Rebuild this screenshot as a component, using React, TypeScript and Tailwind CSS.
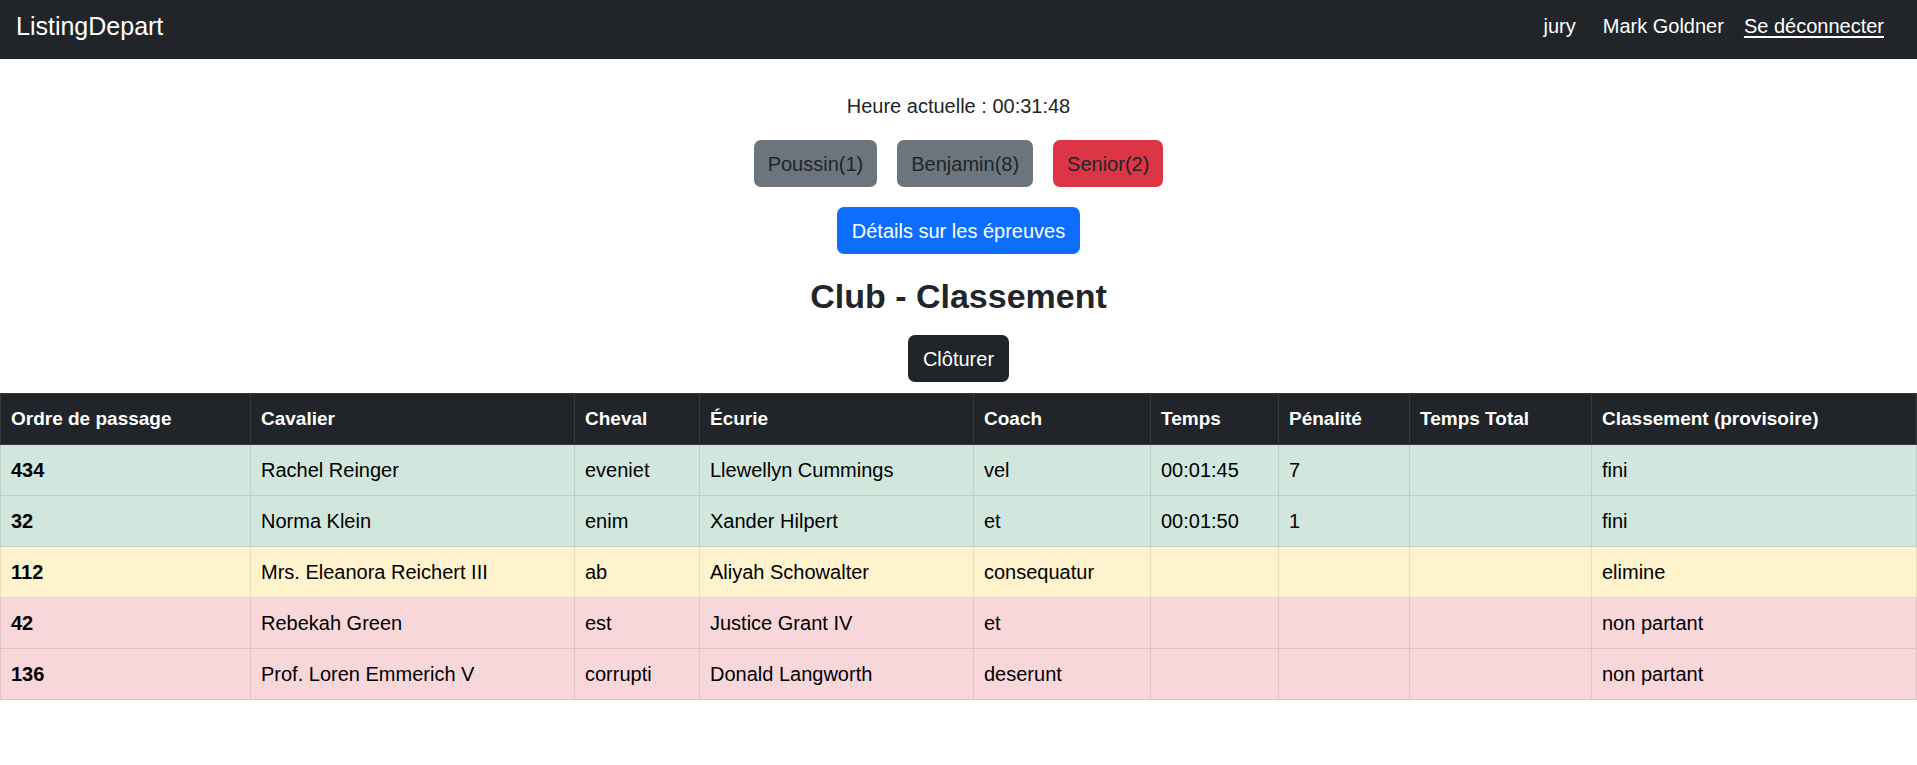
import React from 'react';

type Row = {
  ordre: string;
  cavalier: string;
  cheval: string;
  ecurie: string;
  coach: string;
  temps: string;
  penalite: string;
  total: string;
  classement: string;
  tone: 'success' | 'warning' | 'danger';
};

const rows: Row[] = [
  { ordre: '434', cavalier: 'Rachel Reinger', cheval: 'eveniet', ecurie: 'Llewellyn Cummings', coach: 'vel', temps: '00:01:45', penalite: '7', total: '', classement: 'fini', tone: 'success' },
  { ordre: '32', cavalier: 'Norma Klein', cheval: 'enim', ecurie: 'Xander Hilpert', coach: 'et', temps: '00:01:50', penalite: '1', total: '', classement: 'fini', tone: 'success' },
  { ordre: '112', cavalier: 'Mrs. Eleanora Reichert III', cheval: 'ab', ecurie: 'Aliyah Schowalter', coach: 'consequatur', temps: '', penalite: '', total: '', classement: 'elimine', tone: 'warning' },
  { ordre: '42', cavalier: 'Rebekah Green', cheval: 'est', ecurie: 'Justice Grant IV', coach: 'et', temps: '', penalite: '', total: '', classement: 'non partant', tone: 'danger' },
  { ordre: '136', cavalier: 'Prof. Loren Emmerich V', cheval: 'corrupti', ecurie: 'Donald Langworth', coach: 'deserunt', temps: '', penalite: '', total: '', classement: 'non partant', tone: 'danger' },
];

const toneRow = {
  success: 'bg-[#d1e7dd]',
  warning: 'bg-[#fff3cd]',
  danger: 'bg-[#f8d7da]',
};

const toneBorder = {
  success: 'border-[#bcd0c7]',
  warning: 'border-[#e6dbb9]',
  danger: 'border-[#dfc2c4]',
};

const headers = ['Ordre de passage', 'Cavalier', 'Cheval', 'Écurie', 'Coach', 'Temps', 'Pénalité', 'Temps Total', 'Classement (provisoire)'];

export default function App() {
  return (
    <div className="min-h-screen bg-white text-[20px] leading-[30px] text-[#212529]" style={{ fontFamily: '"Liberation Sans", Arial, sans-serif' }}>
      <nav className="flex h-[59px] items-center justify-between bg-[#212529] pb-[7px] pl-[16px] pr-[33px] text-white">
        <a className="text-[25px] leading-[37px]">ListingDepart</a>
        <div className="flex items-center">
          <span className="mr-[27px]">jury</span>
          <span className="mr-[20px]">Mark Goldner</span>
          <a className="underline underline-offset-[3px]">Se déconnecter</a>
        </div>
      </nav>

      <main className="flex flex-col items-center">
        <p className="mt-[32px]">Heure actuelle : 00:31:48</p>

        <div className="mt-[19px] flex gap-[20px]">
          <button className="h-[47px] rounded-[7px] bg-[#6c757d] px-[14px] text-[#212529]">Poussin(1)</button>
          <button className="h-[47px] rounded-[7px] bg-[#6c757d] px-[14px] text-[#212529]">Benjamin(8)</button>
          <button className="h-[47px] rounded-[7px] bg-[#dc3545] px-[14px] text-[#212529]">Senior(2)</button>
        </div>

        <button className="mt-[20px] h-[47px] rounded-[7px] bg-[#0d6efd] px-[15px] text-white">Détails sur les épreuves</button>

        <h2 className="mt-[22px] text-[34px] font-bold leading-[41px]">Club - Classement</h2>

        <button className="mt-[18px] h-[47px] rounded-[7px] bg-[#212529] px-[15px] text-white">Clôturer</button>
      </main>

      <table className="mt-[11px] w-full table-fixed border-collapse text-black">
        <colgroup>
          <col className="w-[250px]" />
          <col className="w-[324px]" />
          <col className="w-[125px]" />
          <col className="w-[274px]" />
          <col className="w-[177px]" />
          <col className="w-[128px]" />
          <col className="w-[131px]" />
          <col className="w-[182px]" />
          <col />
        </colgroup>
        <thead>
          <tr className="bg-[#212529] text-white">
            {headers.map((h) => (
              <th key={h} className="h-[51px] border border-[#373b3e] px-[10px] py-[10px] text-left text-[19px] font-bold">
                {h}
              </th>
            ))}
          </tr>
        </thead>
        <tbody>
          {rows.map((r) => {
            const cell = `border ${toneBorder[r.tone]} px-[10px] py-[10px] h-[51px]`;
            return (
              <tr key={r.ordre} className={toneRow[r.tone]}>
                <th className={`${cell} text-left font-bold`}>{r.ordre}</th>
                <td className={cell}>{r.cavalier}</td>
                <td className={cell}>{r.cheval}</td>
                <td className={cell}>{r.ecurie}</td>
                <td className={cell}>{r.coach}</td>
                <td className={cell}>{r.temps}</td>
                <td className={cell}>{r.penalite}</td>
                <td className={cell}>{r.total}</td>
                <td className={cell}>{r.classement}</td>
              </tr>
            );
          })}
        </tbody>
      </table>
    </div>
  );
}
